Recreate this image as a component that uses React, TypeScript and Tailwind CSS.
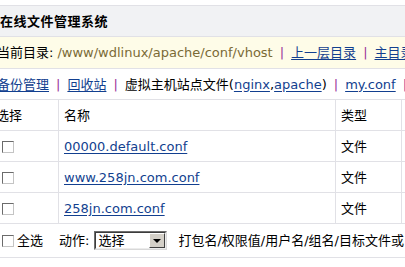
import type { ReactNode } from "react";

const files = ["00000.default.conf", "www.258jn.com.conf", "258jn.com.conf"];

function Sep() {
  return <span className="mx-[7px] text-[#993399]">|</span>;
}

function Link({ children }: { children: ReactNode }) {
  return <a className="text-[#123f8f] underline underline-offset-2">{children}</a>;
}

function Checkbox() {
  return (
    <span className="inline-block h-[12px] w-[12px] shrink-0 border border-t-[#6b6b6b] border-l-[#6b6b6b] border-r-[#c4c4c4] border-b-[#c4c4c4] bg-white" />
  );
}

function Cell({ w, children }: { w: string; children?: ReactNode }) {
  return (
    <div className={`flex h-full shrink-0 items-center border-r border-[#e1e1e6] pl-[5px] ${w}`}>
      {children}
    </div>
  );
}

export default function App() {
  return (
    <div className="h-[267px] w-[405px] overflow-hidden bg-white font-['DejaVu_Sans','Noto_Sans_CJK_SC',sans-serif] text-[13px] leading-none text-black">
      <div className="-ml-[9px] w-[760px] whitespace-nowrap pt-[5px]">
        <div className="flex h-[32px] items-center border-y border-[#e1e1e6] bg-[#f1f2f4] pl-[9px] font-bold tracking-[0.5px]">
          在线文件管理系统
        </div>

        <div className="flex h-[32px] items-center border-b border-[#e1e1e6] bg-[#fefce8] pl-[6px]">
          <span>当前目录: </span>
          <span className="ml-[4px] text-[#7a6a35]">/www/wdlinux/apache/conf/vhost</span>
          <Sep />
          <Link>上一层目录</Link>
          <Sep />
          <Link>主目录</Link>
          <Sep />
          <Link>新建文件</Link>
        </div>

        <div className="flex h-[31px] items-center border-b border-[#e1e1e6] pl-[6px]">
          <Link>备份管理</Link>
          <Sep />
          <Link>回收站</Link>
          <Sep />
          <span>虚拟主机站点文件(</span>
          <Link>nginx</Link>
          <span>,</span>
          <Link>apache</Link>
          <span>)</span>
          <Sep />
          <Link>my.conf</Link>
          <Sep />
          <Link>php.ini</Link>
        </div>

        <div className="flex h-[31px] border-b border-[#e1e1e6]">
          <Cell w="w-[68px]">选择</Cell>
          <Cell w="w-[277px]">名称</Cell>
          <Cell w="w-[66px]">类型</Cell>
          <Cell w="w-[120px]">大小</Cell>
        </div>

        {files.map((name) => (
          <div key={name} className="flex h-[31px] border-b border-[#e1e1e6]">
            <Cell w="w-[68px]">
              <span className="ml-[6px] mt-[2px] flex">
                <Checkbox />
              </span>
            </Cell>
            <Cell w="w-[277px]">
              <Link>{name}</Link>
            </Cell>
            <Cell w="w-[66px]">文件</Cell>
            <Cell w="w-[120px]">1.2 KB</Cell>
          </div>
        ))}

        <div className="flex h-[34px] items-center border-b border-[#e1e1e6] pl-[5px]">
          <span className="ml-[6px] mt-[1px] flex">
            <Checkbox />
          </span>
          <span className="ml-[3px]">全选</span>
          <span className="ml-[16px]">动作:</span>
          <div className="ml-[5px] flex h-[19px] w-[73px] border border-t-[#6e6e6e] border-l-[#6e6e6e] border-r-[#d8d8d8] border-b-[#d8d8d8] bg-white">
            <div className="flex flex-1 border border-t-[#3c3c3c] border-l-[#3c3c3c] border-r-[#ececec] border-b-[#ececec]">
              <span className="flex-1 pl-[2px] pt-[1px]">选择</span>
              <span className="flex w-[16px] items-center justify-center border border-t-white border-l-white border-r-[#404040] border-b-[#404040] bg-[#d4d0c8]">
                <span className="h-0 w-0 border-x-[4px] border-t-[4px] border-x-transparent border-t-black" />
              </span>
            </div>
          </div>
          <span className="ml-[11px]">打包名/权限值/用户名/组名/目标文件或目录名</span>
        </div>
      </div>
    </div>
  );
}
